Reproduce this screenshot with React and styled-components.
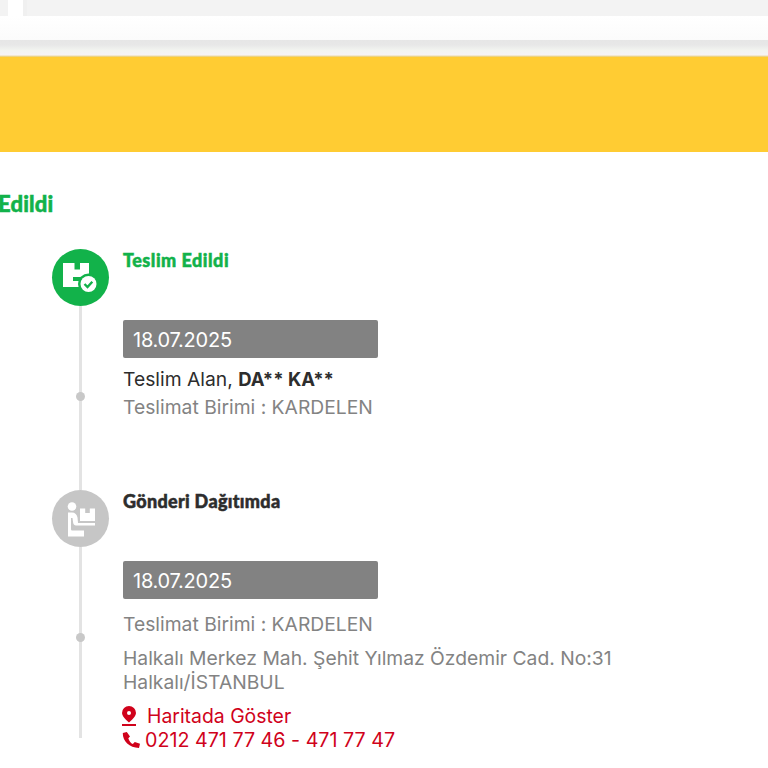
import React from "react";
import styled, { createGlobalStyle } from "styled-components";

const Global = createGlobalStyle`
  html, body { margin: 0; padding: 0; background: #fff; }
  body {
    width: 768px; height: 768px; overflow: hidden;
    font-family: Inter, "Liberation Sans", sans-serif; font-feature-settings: "calt" 0;
  }
`;
const Page = styled.div`display: flex; flex-direction: column; width: 768px; height: 768px; overflow: hidden;`;
const TabStrip = styled.div`display: flex; height: 16px; background: #f3f3f3; padding-left: 8px;`;
const Tab = styled.div`width: 15px; background: #fff; box-shadow: 4px 0 0 #f0f0f0;`;
const NavBar = styled.div`height: 24px; background: linear-gradient(#fff, #fbfbfb);`;
const NavShadow = styled.div`height: 17px; background: linear-gradient(#e6e6e6 0, #e8e8e8 30%, #f2f4f0 60%, #f6f3f6 88%, #e8c860 100%);`;
const Banner = styled.div`height: 95px; background: #ffcc33;`;
const Status = styled.h1`
  margin: 38px 0 0 -2px; height: 30px; font: 900 22px/28px Lato, sans-serif; letter-spacing: 0.15px; color: #12b24a;
  white-space: nowrap; -webkit-text-stroke: 0.5px #12b24a;
`;
const Timeline = styled.div`display: flex; flex-direction: column; padding: 29px 0 0 52px;`;
const Step = styled.div`display: flex; gap: 14px; height: ${p => p.$height}px;`;
const Rail = styled.div`position: relative; display: flex; flex-direction: column; align-items: center; width: 57px; flex: none;`;
const Badge = styled.div`
  display: flex; align-items: center; justify-content: center; width: 57px; height: 57px; border-radius: 50%;
  background: ${p => p.$bg}; flex: none;
`;
const Line = styled.div`width: 3px; flex: 1; background: #e3e3e3;`;
const Dot = styled.span`
  position: absolute; left: 24px; top: ${p => p.$top}px; width: 9px; height: 9px; border-radius: 50%; background: #c8c8c8;
`;
const Body = styled.div`display: flex; flex-direction: column; width: 560px; & > * { flex: none; }`;
const Title = styled.div`
  height: 24px; margin-bottom: 47px; font: 900 18px/22px Lato, sans-serif; letter-spacing: ${p => p.$spacing}px;
  color: ${p => p.$color}; -webkit-text-stroke: 0.5px ${p => p.$color};
`;
const DateBar = styled.div`
  width: 255px; height: 38px; box-sizing: border-box; padding-left: 10px; border-radius: 2px; background: #828282;
  color: #fff; font-size: 20px; line-height: 40px; letter-spacing: -0.25px;
`;
const Receiver = styled.div`
  margin-top: 9px; font-size: 19.300px; line-height: 25px; color: #2d2d2d;
  b { font-size: 18.500px; font-weight: 700; }
`;
const Info = styled.div`
  margin-top: ${p => p.$mt || 0}px; font-size: 19.300px; line-height: 24px; color: #838383; white-space: nowrap;
`;
const LinkRow = styled.div`
  display: flex; align-items: center; gap: ${p => p.$gap}px; margin-top: ${p => p.$mt || 0}px; height: 24px;
  font-size: ${p => p.$size}px; line-height: 24px; color: #d0021b; white-space: nowrap;
  svg { margin-left: -1px; }
`;

const BoxCheck = () => (
  <svg width="57" height="57" viewBox="0 0 57 57">
    <path fill="#fff" fillRule="evenodd" d="M11 14h11.500v6.500H28V14h9v24H11zM21 28v4h9v-4z" />
    <circle cx="36.500" cy="35" r="10.500" fill="#12b24a" />
    <circle cx="36.500" cy="35" r="8" fill="#fff" />
    <path fill="none" stroke="#12b24a" strokeWidth="2.400" d="M32.500 35l3 3 4.800-5.200" />
  </svg>
);
const Courier = () => (
  <svg width="57" height="57" viewBox="0 0 57 57">
    <circle cx="20" cy="16.500" r="4.300" fill="#fff" />
    <path fill="#fff" d="M16 22.500h4c3 0 5 2 5.500 5l.5 5.500h17v2.500H24c-1.500 0-2.500-1-2.800-2.500l-.7-5h-1.500v11c0 1 .5 1.500 1.500 1.500h11.500v6H16z" />
    <path fill="#fff" fillRule="evenodd" d="M28 18.500h5.200v4.500h4.600v-4.500H43V31H28z" />
  </svg>
);
const Pin = () => (
  <svg width="14" height="20" viewBox="0 0 14 20">
    <path fill="#d0021b" fillRule="evenodd" d="M7 0a7 7 0 0 1 7 7C14 11 7 16.500 7 16.500S0 11 0 7a7 7 0 0 1 7-7zm0 5a2 2 0 1 0 0 4 2 2 0 0 0 0-4z" />
    <rect y="18" width="14" height="2" fill="#d0021b" />
  </svg>
);
const Phone = () => (
  <svg width="18" height="16" viewBox="0 0 18 16">
    <path fill="#d0021b" d="M4.800 0 .8 1C.5 9 7.500 15.700 17 16l1-4.200-5.200-1.800-2 2.100C8.800 11 7 8.800 6.300 6.200l1.700-1.700z" />
  </svg>
);

export default function App() {
  return (
    <Page>
      <Global />
      <TabStrip><Tab /></TabStrip>
      <NavBar />
      <NavShadow />
      <Banner />
      <Status>Edildi</Status>
      <Timeline>
        <Step $height={241}>
          <Rail>
            <Badge $bg="#12b24a"><BoxCheck /></Badge>
            <Line />
            <Dot $top={143} />
          </Rail>
          <Body>
            <Title $color="#12b24a" $spacing={0.5}>Teslim Edildi</Title>
            <DateBar>18.07.2025</DateBar>
            <Receiver>Teslim Alan, <b>DA** KA**</b></Receiver>
            <Info $mt={3}>Teslimat Birimi : KARDELEN</Info>
          </Body>
        </Step>
        <Step $height={248}>
          <Rail>
            <Badge $bg="#c6c6c6"><Courier /></Badge>
            <Line />
            <Dot $top={143} />
          </Rail>
          <Body>
            <Title $color="#2d2d2d" $spacing={0.3}>Gönderi Dağıtımda</Title>
            <DateBar>18.07.2025</DateBar>
            <Info $mt={13}>Teslimat Birimi : KARDELEN</Info>
            <Info $mt={10}>Halkalı Merkez Mah. Şehit Yılmaz Özdemir Cad. No:31<br />Halkalı/İSTANBUL</Info>
            <LinkRow $gap={11} $mt={10} $size={19.400}><Pin />Haritada Göster</LinkRow>
            <LinkRow $gap={5} $size={19.700}><Phone />0212 471 77 46 - 471 77 47</LinkRow>
          </Body>
        </Step>
      </Timeline>
    </Page>
  );
}
